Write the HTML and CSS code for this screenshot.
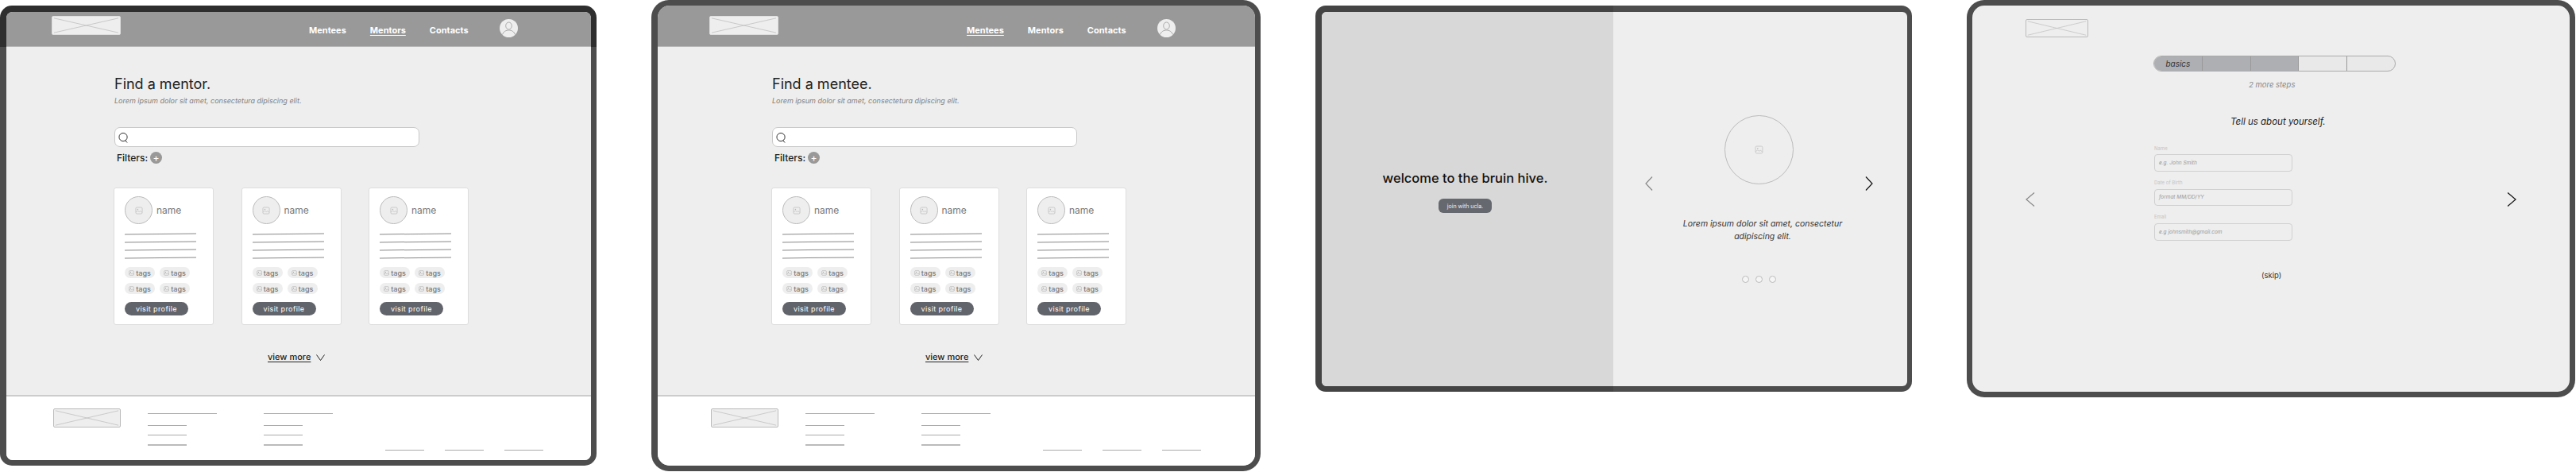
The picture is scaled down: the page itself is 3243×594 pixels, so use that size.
FILE: index.html
```html
<!DOCTYPE html>
<html lang="en">
<head>
    <meta charset="UTF-8">
    <meta name="viewport" content="width=device-width, initial-scale=1.0">
    <title>Bruin Hive Wireframes</title>
    <link rel="stylesheet" href="styles.css">
</head>
<body>
    <svg class="defs" width="0" height="0">
        <symbol id="img" viewBox="0 0 16 16">
            <rect x="1.5" y="1.5" width="13" height="13" rx="2.5" fill="none" stroke="currentColor"/>
            <circle cx="5.5" cy="5.5" r="1.2" fill="currentColor"/>
            <path d="M2 11l3.5-2.5 3 2 2-1.500 3.500 2.500" fill="none" stroke="currentColor"/>
        </symbol>
        <symbol id="cross" viewBox="0 0 87 24" preserveAspectRatio="none">
            <path d="M2 2l83 20M85 2L2 22" fill="none" stroke="#bdbdbd" stroke-width="0.8"/>
        </symbol>
        <symbol id="person" viewBox="0 0 23 23">
            <circle cx="11.500" cy="11.500" r="11.500" fill="#eee"/>
            <ellipse cx="11.500" cy="8.500" rx="3.800" ry="4.500" fill="none" stroke="#999" stroke-width="0.8"/>
            <path d="M3.500 19.500c1.500-4 4.500-5.500 8-5.500s6.500 1.500 8 5.500" fill="none" stroke="#999" stroke-width="0.8"/>
        </symbol>
    </svg>

    <!-- find a mentor -->
    <div class="frame frame-mentor">
        <div class="screen">
            <header class="top-bar">
                <div class="wrap top-bar-row">
                    <svg class="logo logo-top"><use href="#cross"/></svg>
                    <nav class="nav">
                        <a class="nav-link">Mentees</a>
                        <a class="nav-link nav-low nav-active">Mentors</a>
                        <a class="nav-link nav-low">Contacts</a>
                    </nav>
                    <svg class="avatar"><use href="#person"/></svg>
                </div>
            </header>
            <main class="main">
                <div class="wrap">
                    <div class="content">
                        <h1 class="title">Find a mentor.</h1>
                        <p class="subtitle">Lorem ipsum dolor sit amet, consectetura dipiscing elit.</p>
                        <div class="search">
                            <svg class="search-icon" viewBox="0 0 14 14"><circle cx="6.500" cy="6.500" r="5.500" fill="none" stroke="#222"/><path d="M9.500 11l2.500 3" stroke="#222"/></svg>
                        </div>
                        <div class="filters">Filters: <span class="plus">+</span></div>
                        <div class="cards">
                            <div class="card">
                                <div class="card-head"><div class="pic"><svg class="pic-icon"><use href="#img"/></svg></div><span class="name">name</span></div>
                                <div class="rules"><i></i><i></i><i></i><i></i></div>
                                <div class="tags">
                                    <span class="tag"><svg class="tag-icon"><use href="#img"/></svg>tags</span>
                                    <span class="tag"><svg class="tag-icon"><use href="#img"/></svg>tags</span>
                                    <span class="tag"><svg class="tag-icon"><use href="#img"/></svg>tags</span>
                                    <span class="tag"><svg class="tag-icon"><use href="#img"/></svg>tags</span>
                                </div>
                                <button class="visit">visit profile</button>
                            </div>
                            <div class="card">
                                <div class="card-head"><div class="pic"><svg class="pic-icon"><use href="#img"/></svg></div><span class="name">name</span></div>
                                <div class="rules"><i></i><i></i><i></i><i></i></div>
                                <div class="tags">
                                    <span class="tag"><svg class="tag-icon"><use href="#img"/></svg>tags</span>
                                    <span class="tag"><svg class="tag-icon"><use href="#img"/></svg>tags</span>
                                    <span class="tag"><svg class="tag-icon"><use href="#img"/></svg>tags</span>
                                    <span class="tag"><svg class="tag-icon"><use href="#img"/></svg>tags</span>
                                </div>
                                <button class="visit">visit profile</button>
                            </div>
                            <div class="card">
                                <div class="card-head"><div class="pic"><svg class="pic-icon"><use href="#img"/></svg></div><span class="name">name</span></div>
                                <div class="rules"><i></i><i></i><i></i><i></i></div>
                                <div class="tags">
                                    <span class="tag"><svg class="tag-icon"><use href="#img"/></svg>tags</span>
                                    <span class="tag"><svg class="tag-icon"><use href="#img"/></svg>tags</span>
                                    <span class="tag"><svg class="tag-icon"><use href="#img"/></svg>tags</span>
                                    <span class="tag"><svg class="tag-icon"><use href="#img"/></svg>tags</span>
                                </div>
                                <button class="visit">visit profile</button>
                            </div>
                        </div>
                        <div class="view-more"><a>view more</a><svg class="view-more-icon" viewBox="0 0 11 8"><path d="M.5.5l5 7 5-7" fill="none" stroke="#222"/></svg></div>
                    </div>
                </div>
            </main>
            <footer class="footer">
                <div class="wrap footer-row">
                    <svg class="logo logo-footer"><use href="#cross"/></svg>
                    <div class="footer-col"><i class="long"></i><i></i><i></i><i class="thick"></i></div>
                    <div class="footer-col"><i class="long"></i><i></i><i></i><i class="thick"></i></div>
                    <div class="footer-links"><i></i><i></i><i></i></div>
                </div>
            </footer>
        </div>
    </div>

    <!-- find a mentee -->
    <div class="frame frame-mentee">
        <div class="screen">
            <header class="top-bar">
                <div class="wrap top-bar-row">
                    <svg class="logo logo-top"><use href="#cross"/></svg>
                    <nav class="nav">
                        <a class="nav-link nav-active">Mentees</a>
                        <a class="nav-link nav-low">Mentors</a>
                        <a class="nav-link nav-low">Contacts</a>
                    </nav>
                    <svg class="avatar"><use href="#person"/></svg>
                </div>
            </header>
            <main class="main">
                <div class="wrap">
                    <div class="content">
                        <h1 class="title">Find a mentee.</h1>
                        <p class="subtitle">Lorem ipsum dolor sit amet, consectetura dipiscing elit.</p>
                        <div class="search">
                            <svg class="search-icon" viewBox="0 0 14 14"><circle cx="6.500" cy="6.500" r="5.500" fill="none" stroke="#222"/><path d="M9.500 11l2.500 3" stroke="#222"/></svg>
                        </div>
                        <div class="filters">Filters: <span class="plus">+</span></div>
                        <div class="cards">
                            <div class="card">
                                <div class="card-head"><div class="pic"><svg class="pic-icon"><use href="#img"/></svg></div><span class="name">name</span></div>
                                <div class="rules"><i></i><i></i><i></i><i></i></div>
                                <div class="tags">
                                    <span class="tag"><svg class="tag-icon"><use href="#img"/></svg>tags</span>
                                    <span class="tag"><svg class="tag-icon"><use href="#img"/></svg>tags</span>
                                    <span class="tag"><svg class="tag-icon"><use href="#img"/></svg>tags</span>
                                    <span class="tag"><svg class="tag-icon"><use href="#img"/></svg>tags</span>
                                </div>
                                <button class="visit">visit profile</button>
                            </div>
                            <div class="card">
                                <div class="card-head"><div class="pic"><svg class="pic-icon"><use href="#img"/></svg></div><span class="name">name</span></div>
                                <div class="rules"><i></i><i></i><i></i><i></i></div>
                                <div class="tags">
                                    <span class="tag"><svg class="tag-icon"><use href="#img"/></svg>tags</span>
                                    <span class="tag"><svg class="tag-icon"><use href="#img"/></svg>tags</span>
                                    <span class="tag"><svg class="tag-icon"><use href="#img"/></svg>tags</span>
                                    <span class="tag"><svg class="tag-icon"><use href="#img"/></svg>tags</span>
                                </div>
                                <button class="visit">visit profile</button>
                            </div>
                            <div class="card">
                                <div class="card-head"><div class="pic"><svg class="pic-icon"><use href="#img"/></svg></div><span class="name">name</span></div>
                                <div class="rules"><i></i><i></i><i></i><i></i></div>
                                <div class="tags">
                                    <span class="tag"><svg class="tag-icon"><use href="#img"/></svg>tags</span>
                                    <span class="tag"><svg class="tag-icon"><use href="#img"/></svg>tags</span>
                                    <span class="tag"><svg class="tag-icon"><use href="#img"/></svg>tags</span>
                                    <span class="tag"><svg class="tag-icon"><use href="#img"/></svg>tags</span>
                                </div>
                                <button class="visit">visit profile</button>
                            </div>
                        </div>
                        <div class="view-more"><a>view more</a><svg class="view-more-icon" viewBox="0 0 11 8"><path d="M.5.5l5 7 5-7" fill="none" stroke="#222"/></svg></div>
                    </div>
                </div>
            </main>
            <footer class="footer">
                <div class="wrap footer-row">
                    <svg class="logo logo-footer"><use href="#cross"/></svg>
                    <div class="footer-col"><i class="long"></i><i></i><i></i><i class="thick"></i></div>
                    <div class="footer-col"><i class="long"></i><i></i><i></i><i class="thick"></i></div>
                    <div class="footer-links"><i></i><i></i><i></i></div>
                </div>
            </footer>
        </div>
    </div>

    <!-- welcome -->
    <div class="frame frame-welcome">
        <div class="screen screen-split">
            <div class="welcome-left">
                <h2 class="welcome-title">welcome to the bruin hive.</h2>
                <button class="join">join with ucla.</button>
            </div>
            <div class="welcome-right">
                <svg class="chev chev-prev" viewBox="0 0 10 18"><path d="M9 .5L1 9l8 8.500" fill="none" stroke="#888" stroke-width="1.200"/></svg>
                <div class="carousel">
                    <div class="carousel-pic"><svg class="carousel-icon"><use href="#img"/></svg></div>
                    <p class="carousel-text">Lorem ipsum dolor sit amet, consectetur<br>adipiscing elit.</p>
                    <div class="dots"><i></i><i></i><i></i></div>
                </div>
                <svg class="chev chev-next" viewBox="0 0 10 18"><path d="M1 .5L9 9l-8 8.500" fill="none" stroke="#111" stroke-width="1.200"/></svg>
            </div>
        </div>
    </div>

    <!-- onboarding -->
    <div class="frame frame-setup">
        <div class="screen screen-setup">
            <svg class="logo logo-setup"><use href="#cross"/></svg>
            <div class="setup-body">
                <svg class="chev chev-wide" viewBox="0 0 12 18"><path d="M11 .5L1 9l10 8.500" fill="none" stroke="#888" stroke-width="1.200"/></svg>
                <div class="setup-col">
                    <div class="steps">
                        <div class="step step-done">basics</div>
                        <div class="step step-done"></div>
                        <div class="step step-done"></div>
                        <div class="step"></div>
                        <div class="step"></div>
                    </div>
                    <p class="steps-left">2 more steps</p>
                    <p class="setup-title">Tell us about yourself.</p>
                    <div class="field field-first">
                        <label class="field-label">Name</label>
                        <div class="field-box">e.g. John Smith</div>
                    </div>
                    <div class="field">
                        <label class="field-label">Date of Birth</label>
                        <div class="field-box field-box-short">format MM/DD/YY</div>
                    </div>
                    <div class="field">
                        <label class="field-label">Email</label>
                        <div class="field-box">e.g johnsmith@gmail.com</div>
                    </div>
                    <p class="skip">(skip)</p>
                </div>
                <svg class="chev chev-wide chev-setup-next" viewBox="0 0 12 18"><path d="M1 .5L11 9 1 17.500" fill="none" stroke="#111" stroke-width="1.200"/></svg>
            </div>
        </div>
    </div>
</body>
</html>
```

FILE: styles.css
```css
body {
    font-family: Inter, "Liberation Sans", sans-serif;
    margin: 0;
    width: 3243px;
    height: 594px;
    overflow: hidden;
    display: flex;
    align-items: flex-start;
    gap: 69px;
    background: #fff;
}
p, h1, h2 {
    margin: 0;
    font-weight: normal;
}
.defs {
    position: absolute;
}

/* device frames */
.frame {
    box-sizing: border-box;
    flex: none;
    background: #4d4d4d;
}
.screen {
    box-sizing: border-box;
    height: 100%;
    overflow: hidden;
    display: flex;
    flex-direction: column;
    background: #eee;
}
.frame-mentor {
    width: 751px;
    height: 579px;
    margin-top: 7px;
    padding: 8px 7px 7px 8px;
    border-radius: 15px;
    background: linear-gradient(#2e2e2e 52px, #4d4d4d 52px);
}
.frame-mentor .screen {
    border-radius: 8px;
}
.frame-mentee {
    width: 767px;
    height: 593px;
    padding: 7px 7px 7px 8px;
    border-radius: 22px;
}
.frame-mentee .screen {
    border-radius: 15px;
}
.frame-welcome {
    width: 751px;
    height: 486px;
    margin-top: 7px;
    padding: 8px 6px 7px 8px;
    border-radius: 13px;
    background: linear-gradient(90deg, #444 375px, #4d4d4d 375px);
}
.frame-welcome .screen {
    border-radius: 6px;
}
.frame-setup {
    width: 766px;
    height: 500px;
    padding: 7px;
    border-radius: 22px;
}
.frame-setup .screen {
    border-radius: 15px;
}

/* header */
.wrap {
    box-sizing: border-box;
    width: 622px;
    margin: 0 auto;
}
.top-bar {
    flex: none;
    box-sizing: border-box;
    height: 44px;
    background: #999;
    border-bottom: 1px solid #b5b5b5;
    display: flex;
    align-items: flex-end;
}
.frame-mentee .top-bar {
    height: 52px;
}
.top-bar-row {
    display: flex;
    align-items: flex-end;
    height: 44px;
    padding-bottom: 14px;
}
.logo {
    flex: none;
    display: block;
    box-sizing: border-box;
    border-radius: 2px;
}
.logo-top {
    width: 87px;
    height: 24px;
    background: #eee;
    border: 1px solid #ddd;
}
.nav {
    display: flex;
    gap: 30px;
    margin-left: 237px;
    width: 202px;
    font-size: 11px;
    font-weight: 700;
    color: #fff;
}
.nav-link {
    line-height: 14px;
    height: 14px;
    margin-bottom: -1px;
    white-space: nowrap;
    flex: none;
}
.nav-low {
    margin-bottom: -2px;
}
.nav-active {
    text-decoration: underline;
    text-underline-offset: 2px;
}
.avatar {
    flex: none;
    width: 23px;
    height: 23px;
    margin-left: 38px;
    margin-bottom: -3px;
}

/* search page */
.main {
    flex: none;
    height: 438px;
}
.content {
    padding: 35px 0 0 79px;
}
.title {
    font-size: 18px;
    line-height: 24px;
    color: #222;
}
.subtitle {
    margin-top: 2px;
    font-size: 9px;
    line-height: 14px;
    font-style: italic;
    color: #808080;
}
.search {
    box-sizing: border-box;
    width: 384px;
    height: 25px;
    margin-top: 26px;
    padding-left: 4px;
    display: flex;
    align-items: center;
    background: #fff;
    border: 1px solid #c8c8c8;
    border-radius: 7px;
}
.search-icon {
    width: 13px;
    height: 14px;
}
.filters {
    display: flex;
    align-items: center;
    gap: 3px;
    height: 15px;
    margin: 6px 0 0 3px;
    font-size: 12px;
    font-weight: 500;
    color: #222;
}
.plus {
    width: 15px;
    height: 15px;
    border-radius: 50%;
    background: #999;
    color: #fff;
    font-size: 12px;
    line-height: 15px;
    text-align: center;
}

/* cards */
.cards {
    display: flex;
    gap: 34.500px;
    margin: 30px 0 0 -1px;
}
.card {
    box-sizing: border-box;
    width: 126px;
    height: 173px;
    padding: 10px 13px 0;
    background: #fff;
    border: 1px solid #ddd;
    border-radius: 3px;
}
.card-head {
    display: flex;
    align-items: center;
    gap: 5px;
}
.pic {
    box-sizing: border-box;
    width: 35px;
    height: 35px;
    display: flex;
    align-items: center;
    justify-content: center;
    background: #eee;
    border: 1px solid #bbb;
    border-radius: 50%;
}
.pic-icon {
    width: 10px;
    height: 10px;
    color: #b5b5b5;
}
.name {
    font-size: 12px;
    color: #777;
}
.rules {
    margin-top: 12px;
    width: 90px;
}
.rules i {
    display: block;
    height: 1px;
    margin-bottom: 9px;
    background: #888;
    transform: rotate(-0.5deg);
}
.tags {
    display: grid;
    grid-template-columns: 38px 38px;
    gap: 6px;
    margin-top: 11px;
}
.tag {
    height: 14px;
    display: flex;
    align-items: center;
    justify-content: center;
    gap: 2px;
    background: #eee;
    border-radius: 7px;
    font-size: 9px;
    font-weight: 500;
    color: #777;
}
.tag-icon {
    flex: none;
    width: 7px;
    height: 7px;
    color: #999;
}
.visit {
    display: block;
    width: 80px;
    height: 17px;
    margin-top: 10px;
    padding: 0;
    background: #62646b;
    border: 0;
    border-radius: 9px;
    font-family: inherit;
    font-size: 9px;
    letter-spacing: 0.4px;
    color: #fff;
}
.view-more {
    display: flex;
    align-items: center;
    gap: 7px;
    height: 15px;
    margin: 32px 0 0 193px;
    font-size: 11px;
    font-weight: 500;
    color: #222;
}
.view-more a {
    text-decoration: underline;
    text-underline-offset: 2px;
}
.view-more-icon {
    width: 11px;
    height: 8px;
    margin-top: 3px;
}

/* footer */
.footer {
    flex: 1;
    background: #fff;
    border-top: 2px solid #ccc;
}
.footer-row {
    display: flex;
    align-items: flex-start;
    padding: 15px 0 0 2px;
}
.logo-footer {
    width: 85px;
    height: 24px;
    background: #eee;
    border: 1px solid #bbb;
}
.footer-col {
    width: 87px;
    margin: 6px 0 0 34px;
}
.footer-col + .footer-col {
    margin-left: 59px;
}
.footer-col i {
    display: block;
    width: 49px;
    height: 1px;
    margin-bottom: 11px;
    background: #aaa;
}
.footer-col .long {
    width: 87px;
    margin-bottom: 14px;
}
.footer-col .thick {
    height: 2px;
    background: #bbb;
}
.footer-links {
    display: flex;
    gap: 26px;
    margin: 52px 0 0 66px;
}
.footer-links i {
    width: 49px;
    height: 1px;
    background: #aaa;
}

/* welcome */
.screen-split {
    flex-direction: row;
}
.welcome-left {
    box-sizing: border-box;
    width: 367px;
    padding: 197px 6px 0 0;
    display: flex;
    flex-direction: column;
    align-items: center;
    background: #d8d8d8;
}
.welcome-title {
    font-size: 16.500px;
    line-height: 24px;
    font-weight: 500;
    color: #111;
}
.join {
    width: 67px;
    height: 18px;
    margin-top: 14px;
    padding: 0;
    background: #666870;
    border: 0;
    border-radius: 6px;
    font-family: inherit;
    font-size: 7px;
    color: #eee;
}
.welcome-right {
    flex: 1;
    display: flex;
    align-items: flex-start;
    padding-left: 40px;
}
.chev {
    flex: none;
    width: 10px;
    height: 18px;
}
.chev-prev, .chev-next {
    margin-top: 207px;
}
.carousel {
    width: 267px;
    display: flex;
    flex-direction: column;
    align-items: center;
    padding-top: 130px;
}
.carousel-pic {
    box-sizing: border-box;
    width: 87px;
    height: 87px;
    display: flex;
    align-items: center;
    justify-content: center;
    border: 1px solid #bbb;
    border-radius: 50%;
}
.carousel-icon {
    width: 11px;
    height: 13px;
    color: #bbb;
}
.carousel-text {
    margin: 42px 0 0 9px;
    font-size: 10.500px;
    line-height: 16px;
    font-style: italic;
    text-align: center;
    white-space: nowrap;
    color: #333;
}
.dots {
    display: flex;
    gap: 8px;
    margin-top: 41px;
}
.dots i {
    box-sizing: border-box;
    width: 9px;
    height: 9px;
    background: #f5f5f5;
    border: 1px solid #bbb;
    border-radius: 50%;
}

/* onboarding */
.screen-setup {
    padding: 17px 0 0 67px;
}
.logo-setup {
    width: 79px;
    height: 23px;
    border: 1px solid #bbb;
}
.setup-body {
    display: flex;
    align-items: flex-start;
    margin-top: 23px;
}
.chev-wide {
    width: 12px;
    height: 18px;
    margin-top: 172px;
}
.chev-setup-next {
    margin-left: 140px;
}
.setup-col {
    width: 305px;
    margin-left: 149px;
}
.steps {
    display: flex;
    box-sizing: border-box;
    height: 20px;
    background: #e9e9e9;
    border: 1px solid #aaa;
    border-radius: 10px;
    overflow: hidden;
}
.step {
    box-sizing: border-box;
    flex: 1;
    border-right: 1px solid #999;
    font-size: 10px;
    font-style: italic;
    line-height: 18px;
    text-align: center;
    color: #333;
}
.step:last-child {
    border-right: 0;
}
.step-done {
    background: #aeafb3;
}
.steps-left {
    margin: 10px 0 0 120px;
    font-size: 9.500px;
    line-height: 14px;
    font-style: italic;
    color: #888;
}
.setup-title {
    margin: 32px 0 0 97px;
    font-size: 11.500px;
    line-height: 14px;
    font-style: italic;
    color: #222;
}
.field {
    width: 174px;
    margin: 9px 0 0 1px;
}
.field-first {
    margin-top: 22px;
}
.field-label {
    display: block;
    font-size: 6px;
    line-height: 10px;
    color: #c4c4c4;
}
.field-box {
    box-sizing: border-box;
    height: 22px;
    margin-top: 3px;
    padding-left: 5px;
    border: 1px solid #d0d0d0;
    border-radius: 4px;
    font-size: 6.500px;
    font-style: italic;
    line-height: 20px;
    color: #999;
}
.field-first .field-box {
    margin-top: 2px;
}
.field-box-short {
    height: 21px;
    line-height: 19px;
}
.skip {
    margin: 37px 0 0 136px;
    font-size: 9.500px;
    line-height: 14px;
    color: #333;
}
```
